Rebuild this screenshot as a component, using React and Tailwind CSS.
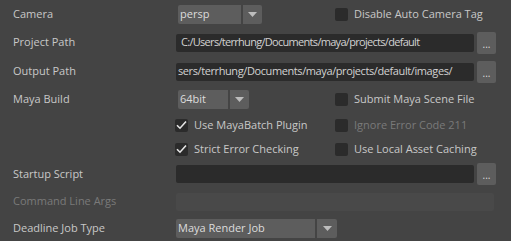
import React from "react";

const font = { fontFamily: '"Open Sans", "Noto Sans", sans-serif' };

function Label({ children, disabled }) {
  return (
    <div className={`w-[163px] shrink-0 text-[11px] ${disabled ? "text-[#7a7a7a]" : "text-[#c8c8c8]"}`}>
      {children}
    </div>
  );
}

function Arrow() {
  return (
    <svg width="9" height="5" viewBox="0 0 9 5">
      <path d="M0 0h9L4.5 5z" fill="#bdbdbd" />
    </svg>
  );
}

function Combo({ value, main, arrow, offset = "ml-[2px]" }) {
  return (
    <div className={`flex h-[19px] ${offset}`}>
      <div className={`${main} bg-[#5d5d5d] rounded-l-[2px] flex items-center pl-[2px] text-[11px] text-[#dcdcdc]`}>
        {value}
      </div>
      <div className={`${arrow} ml-[2px] bg-[#5d5d5d] rounded-r-[2px] flex items-center justify-center`}>
        <Arrow />
      </div>
    </div>
  );
}

function Check({ label, checked, disabled }) {
  return (
    <div className="flex items-center gap-[6px]">
      <div className="w-[13px] h-[13px] rounded-[2px] bg-[#2b2b2b] flex items-center justify-center">
        {checked && (
          <svg width="11" height="10" viewBox="0 0 11 10">
            <path d="M1 5.2l3 3L10 1.5" fill="none" stroke="#e6e6e6" strokeWidth="1.6" />
          </svg>
        )}
      </div>
      <span className={`text-[11px] ${disabled ? "text-[#7a7a7a]" : "text-[#c8c8c8]"}`}>{label}</span>
    </div>
  );
}

function PathField({ value, browse = true, disabled, pad = "pl-[5px]", track = "tracking-[-0.4px]" }) {
  return (
    <div className="flex items-center">
      <div
        className={`h-[18px] ${browse ? "w-[298px]" : "w-[318px]"} rounded-[2px] flex items-center ${pad} ${track} overflow-hidden whitespace-nowrap text-[11px] text-[#d2d2d2] ${
          disabled ? "bg-[#494949]" : "bg-[#2b2b2b]"
        }`}
      >
        {value}
      </div>
      {browse && (
        <div className="ml-[3px] w-[19px] h-[22px] bg-[#5d5d5d] rounded-[2px] flex items-end justify-center pb-[5px] text-[10px] leading-none text-[#dcdcdc]">
          ...
        </div>
      )}
    </div>
  );
}

export default function App() {
  return (
    <div className="w-[511px] h-[241px] bg-[#444444] pl-[13px] overflow-hidden select-none" style={font}>
      {/* Camera */}
      <div className="h-[28px] flex items-center">
        <Label>Camera</Label>
        <div className="grid grid-cols-[159px_1fr] items-center">
          <Combo value="persp" main="w-[63px]" arrow="w-[19px]" />
          <Check label="Disable Auto Camera Tag" />
        </div>
      </div>

      {/* Project Path */}
      <div className="h-[29px] flex items-center">
        <Label>Project Path</Label>
        <PathField value="C:/Users/terrhung/Documents/maya/projects/default" track="tracking-[-0.7px]" />
      </div>

      {/* Output Path */}
      <div className="h-[29px] flex items-center">
        <Label>Output Path</Label>
        <PathField value="sers/terrhung/Documents/maya/projects/default/images/" pad="pl-[2px]" />
      </div>

      {/* Maya Build */}
      <div className="h-[27px] flex items-center">
        <Label>Maya Build</Label>
        <div className="grid grid-cols-[159px_1fr] items-center">
          <Combo value="64bit" main="w-[50px]" arrow="w-[19px]" />
          <Check label="Submit Maya Scene File" />
        </div>
      </div>

      {/* MayaBatch */}
      <div className="h-[24px] flex items-center">
        <div className="w-[162px] shrink-0" />
        <div className="grid grid-cols-[160px_1fr] items-center">
          <Check label="Use MayaBatch Plugin" checked />
          <Check label="Ignore Error Code 211" disabled />
        </div>
      </div>

      {/* Strict */}
      <div className="h-[24px] flex items-center">
        <div className="w-[162px] shrink-0" />
        <div className="grid grid-cols-[160px_1fr] items-center">
          <Check label="Strict Error Checking" checked />
          <Check label="Use Local Asset Caching" />
        </div>
      </div>

      {/* Startup Script */}
      <div className="h-[26px] flex items-center">
        <Label>Startup Script</Label>
        <PathField value="" />
      </div>

      {/* Command Line Args */}
      <div className="h-[29px] flex items-center">
        <Label disabled>Command Line Args</Label>
        <PathField value="" browse={false} disabled />
      </div>

      {/* Deadline Job Type */}
      <div className="h-[25px] flex items-center">
        <Label>Deadline Job Type</Label>
        <Combo value="Maya Render Job" main="w-[139px]" arrow="w-[20px]" offset="ml-0" />
      </div>
    </div>
  );
}
